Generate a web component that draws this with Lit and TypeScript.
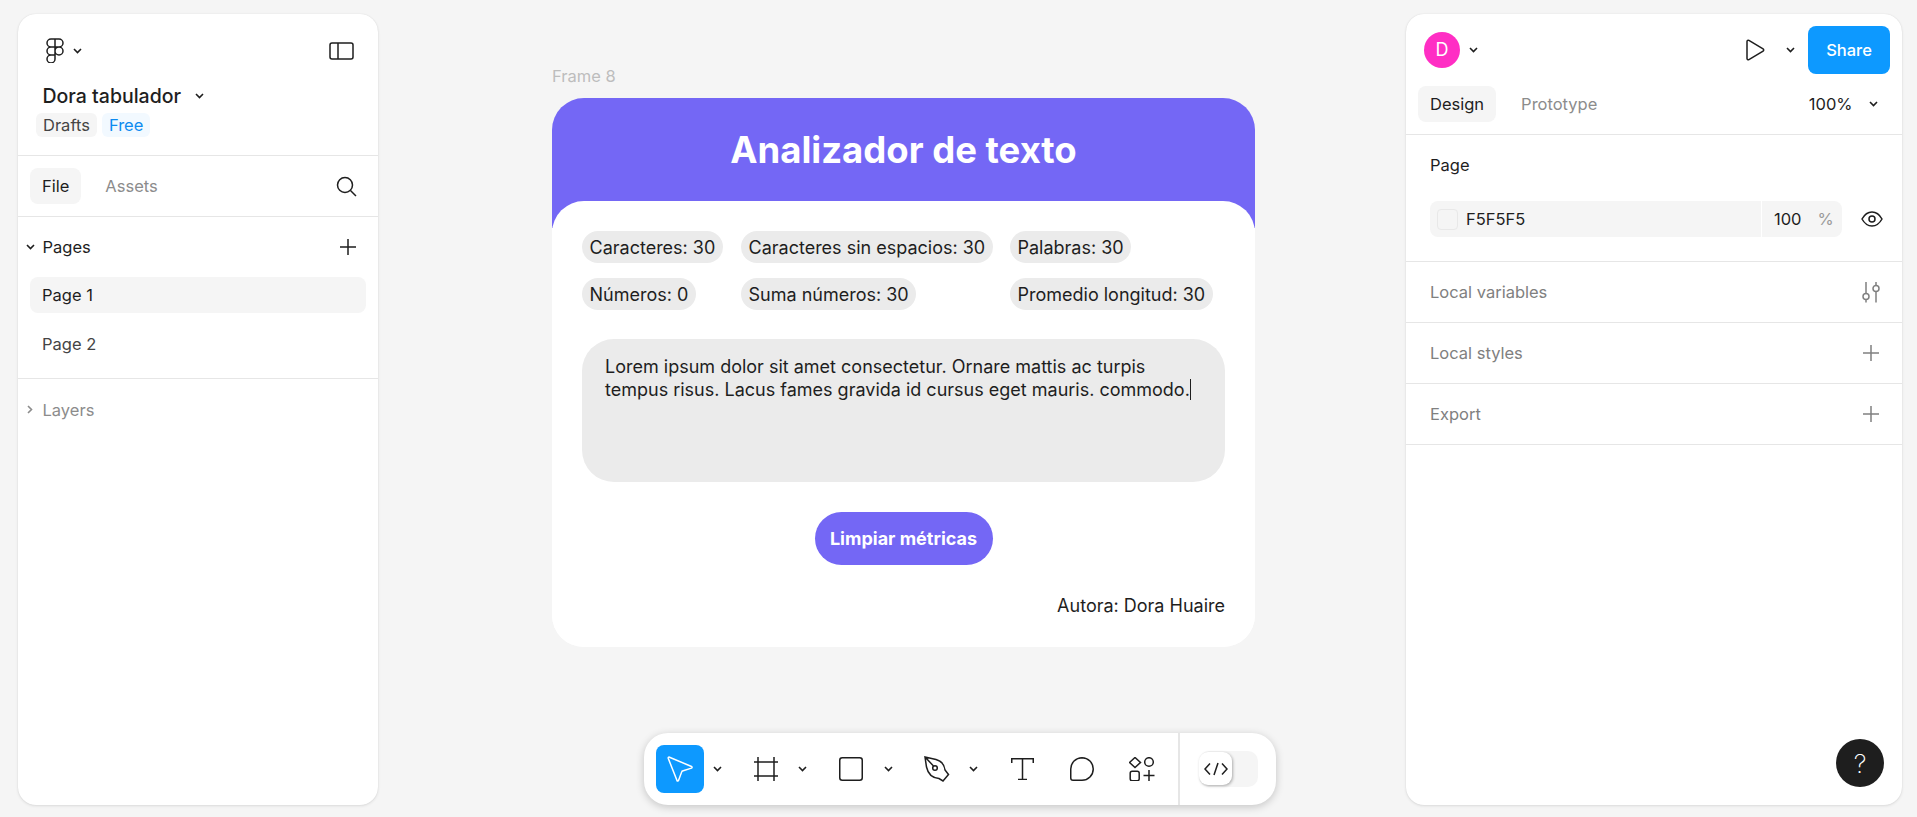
import { LitElement, css, html, svg } from "lit";
import { customElement } from "lit/decorators.js";

const chevron = html`<svg class="chev" width="9" height="6" viewBox="0 0 9 6"><path d="M1 1l3.5 3.5L8 1" /></svg>`;
const plus = html`<svg class="ico" width="18" height="18" viewBox="0 0 18 18"><path d="M9 1v16M1 9h16" /></svg>`;

const toolIcons = {
  move: svg`<path d="M2.5 1.2l22 9.300c.8.4.8 1.300 0 1.600L15.500 15c-.4.2-.7.5-.8.9l-3.200 8.600c-.3.8-1.300.8-1.500 0L1.300 2.500C1 1.500 1.600.9 2.500 1.200z" />`,
  frame: svg`<path d="M4 0v24M20 0v24M0 5h24M0 19h24" />`,
  rect: svg`<rect x=".75" y=".75" width="22.500" height="22.500" rx="2.500" />`,
  pen: svg`<path d="M1 1l11 2.500C17 5 20.500 9 21 14l3.500 4.500L19 25l-4-2.500C9 22 4 18 2.500 11zM1 1l8.500 9" /><circle cx="11" cy="12" r="2.300" />`,
  text: svg`<path d="M.75 5V.75h21.500V5M11.500.75V21.500M7 21.500h9" />`,
  comment: svg`<path d="M12 .75a11.250 11.250 0 0 1 0 22.500H3A2.250 2.250 0 0 1 .75 21V12A11.250 11.250 0 0 1 12 .75z" />`,
  comps: svg`<path d="M6 .5l5.500 5-5.500 5-5.500-5zM20 13v11M14.500 18.500h11" /><circle cx="20" cy="5" r="4.300" /><rect x="1.200" y="14.200" width="9" height="9.600" rx="2" />`,
};

@customElement("app-root")
export class AppRoot extends LitElement {
  render() {
    return html`
      <aside class="panel left">
        <div class="file-head">
          <div class="row-between">
            <div class="logo-wrap">
              <svg class="ico" width="18" height="25" viewBox="0 0 18 25">
                <path d="M9 1H5a4 4 0 0 0 0 8h4zM9 9H5a4 4 0 0 0 0 8h4zM9 17H5a4 4 0 1 0 4 4zM9 1h4a4 4 0 0 1 0 8H9zM17 13a4 4 0 1 1-8 0 4 4 0 0 1 8 0z" />
              </svg>
              ${chevron}
            </div>
            <svg class="ico" width="25" height="18" viewBox="0 0 25 18"><rect x="1" y="1" width="23" height="16" rx="2" /><path d="M9 1v16" /></svg>
          </div>
          <div class="file-title">Dora tabulador ${chevron}</div>
          <div class="chips">
            <span class="mini">Drafts</span>
            <span class="mini free">Free</span>
          </div>
        </div>
        <div class="tabs-row">
          <span class="tab on">File</span>
          <span class="tab">Assets</span>
          <svg class="ico search" width="21" height="21" viewBox="0 0 21 21"><circle cx="9" cy="9" r="7.500" /><path d="M14.500 14.500l5.500 5.500" /></svg>
        </div>
        <div class="pages">
          <div class="section-head">
            <span class="label">${chevron}Pages</span>
            ${plus}
          </div>
          <div class="page on">Page 1</div>
          <div class="page">Page 2</div>
        </div>
        <div class="layers">
          <svg class="chev side" width="6" height="9" viewBox="0 0 6 9"><path d="M1 1l3.500 3.500L1 8" /></svg>Layers
        </div>
      </aside>

      <main class="canvas">
        <div class="frame-label">Frame 8</div>
        <section class="frame">
          <header class="banner">Analizador de texto</header>
          <div class="body">
            <div class="metrics">
              <span>Caracteres: 30</span>
              <span>Caracteres sin espacios: 30</span>
              <span>Palabras: 30</span>
              <span>Números: 0</span>
              <span>Suma números: 30</span>
              <span>Promedio longitud: 30</span>
            </div>
            <div class="input">
              Lorem ipsum dolor sit amet consectetur. Ornare mattis ac turpis
              tempus risus. Lacus fames gravida id cursus eget mauris. commodo.<i class="caret"></i>
            </div>
            <button class="clear">Limpiar métricas</button>
            <div class="author">Autora: Dora Huaire</div>
          </div>
        </section>

        <div class="toolbar">
          <div class="tools">
            <span class="tool select"><svg width="26" height="26" viewBox="0 0 26 26">${toolIcons.move}</svg></span>
            <span class="drop">${chevron}</span>
            <span class="tool"><svg width="24" height="24" viewBox="0 0 24 24">${toolIcons.frame}</svg></span>
            <span class="drop">${chevron}</span>
            <span class="tool"><svg width="24" height="24" viewBox="0 0 24 24">${toolIcons.rect}</svg></span>
            <span class="drop">${chevron}</span>
            <span class="tool"><svg width="26" height="27" viewBox="0 0 26 27">${toolIcons.pen}</svg></span>
            <span class="drop">${chevron}</span>
            <span class="tool"><svg width="23" height="22" viewBox="0 0 23 22">${toolIcons.text}</svg></span>
            <span class="tool"><svg width="24" height="24" viewBox="0 0 24 24">${toolIcons.comment}</svg></span>
            <span class="tool"><svg width="26" height="24" viewBox="0 0 26 24">${toolIcons.comps}</svg></span>
          </div>
          <div class="dev">
            <span class="toggle">
              <span class="knob">
                <svg width="24" height="14" viewBox="0 0 24 14"><path d="M6 1.500L1 7l5 5.500M18 1.500L23 7l-5 5.500M14 1l-4 12" /></svg>
              </span>
            </span>
          </div>
        </div>
      </main>

      <aside class="panel right">
        <div class="top">
          <div class="avatar-wrap">
            <span class="avatar">D</span>
            ${chevron}
          </div>
          <div class="actions">
            <svg class="ico" width="20" height="22" viewBox="0 0 20 22"><path d="M2 2.500c0-1 1-1.600 1.900-1.100l14.200 8.500c.8.500.8 1.700 0 2.200L3.900 20.600C3 21.100 2 20.500 2 19.500z" /></svg>
            ${chevron}
            <button class="share">Share</button>
          </div>
        </div>
        <div class="design-tabs">
          <span class="tab on">Design</span>
          <span class="tab">Prototype</span>
          <span class="zoom">100% ${chevron}</span>
        </div>
        <div class="page-sec">
          <div class="page-title">Page</div>
          <div class="fill-row">
            <div class="field">
              <span class="swatch"></span>
              <span class="hex">F5F5F5</span>
              <span class="opacity">100</span>
              <span class="pct">%</span>
            </div>
            <svg class="ico" width="22" height="16" viewBox="0 0 22 16"><path d="M1 8c2.500-4.500 6-7 10-7s7.500 2.500 10 7c-2.500 4.500-6 7-10 7S3.500 12.500 1 8z" /><circle cx="11" cy="8" r="3" /></svg>
          </div>
        </div>
        <div class="line">
          Local variables
          <svg class="ico grey" width="18" height="21" viewBox="0 0 18 21"><path d="M4 0v11.500M4 17.500v3M14 0v3.500M14 9.500v11" /><circle cx="4" cy="14.500" r="3" /><circle cx="14" cy="6.500" r="3" /></svg>
        </div>
        <div class="line">Local styles <span class="grey-wrap">${plus}</span></div>
        <div class="line">Export <span class="grey-wrap">${plus}</span></div>
        <button class="help">?</button>
      </aside>
    `;
  }

  static styles = css`
    :host {
      display: flex;
      justify-content: space-between;
      box-sizing: border-box;
      height: 817px;
      padding: 14px 15px 12px 18px;
      background: #f5f5f5;
      font-family: Inter, "Noto Sans", sans-serif;
      font-size: 16.5px;
      color: #1e1e1e;
      overflow: hidden;
    }

    svg path,
    svg rect,
    svg circle {
      fill: none;
      stroke: currentColor;
      stroke-width: 1.5;
    }
    .chev path {
      stroke-width: 1.6;
    }

    .panel {
      background: #fff;
      border-radius: 18px;
      box-shadow: 0 1px 3px rgba(0, 0, 0, 0.1), 0 0 1px rgba(0, 0, 0, 0.12);
      flex: none;
    }
    .left {
      width: 360px;
    }
    .right {
      position: relative;
      width: 496px;
    }

    .file-head {
      height: 142px;
      box-sizing: border-box;
      padding: 24px 24px 0 24.5px;
      border-bottom: 1px solid #e6e6e6;
    }
    .row-between {
      display: flex;
      align-items: center;
      justify-content: space-between;
      height: 25px;
    }
    .logo-wrap {
      display: flex;
      align-items: center;
      gap: 9px;
      margin-left: 3.5px;
    }
    .file-title {
      display: flex;
      align-items: center;
      gap: 14px;
      margin-top: 21px;
      font-size: 19.5px;
      font-weight: 500;
      line-height: 24px;
    }
    .chips {
      display: flex;
      gap: 5px;
      margin: 5px 0 0 -6.5px;
    }
    .mini {
      padding: 0 7px;
      line-height: 24px;
      border-radius: 6px;
      background: #f5f5f5;
      color: #444;
    }
    .mini.free {
      background: #f2f9ff;
      color: #0d8bf0;
    }

    .tabs-row {
      display: flex;
      align-items: center;
      gap: 12px;
      height: 61px;
      box-sizing: border-box;
      padding: 0 21px 0 12px;
      border-bottom: 1px solid #e6e6e6;
    }
    .tab {
      padding: 0 12px;
      line-height: 36px;
      border-radius: 8px;
      color: #8c8c8c;
    }
    .tab.on {
      background: #f5f5f5;
      color: #1e1e1e;
    }
    .search {
      margin-left: auto;
    }

    .pages {
      height: 162px;
      box-sizing: border-box;
      padding: 0 12px;
      border-bottom: 1px solid #e6e6e6;
    }
    .section-head {
      display: flex;
      align-items: center;
      justify-content: space-between;
      height: 60px;
      padding: 0 9px 0 0;
    }
    .label {
      display: flex;
      align-items: center;
      gap: 8px;
      margin-left: -4.5px;
    }
    .page {
      height: 36px;
      margin-bottom: 12px;
      padding-left: 12px;
      line-height: 36px;
      border-radius: 8px;
    }
    .page.on {
      background: #f5f5f5;
    }
    .page:not(.on) {
      margin-top: 13px;
      color: #444;
    }
    .layers {
      display: flex;
      align-items: center;
      gap: 9.5px;
      height: 61px;
      padding-left: 9px;
      color: #8c8c8c;
    }

    .canvas {
      position: relative;
      flex: 1;
      padding-left: 174px;
    }
    .frame-label {
      padding-top: 53px;
      height: 18px;
      line-height: 18px;
      margin-bottom: 13px;
      color: #bdbdbd;
    }
    .frame {
      width: 703px;
      height: 549px;
      border-radius: 32px;
      background: linear-gradient(#7467f5 0 130px, #fff 130px);
      overflow: hidden;
    }
    .banner {
      height: 103px;
      box-sizing: border-box;
      padding-top: 28px;
      text-align: center;
      font-size: 36.5px;
      line-height: 48px;
      font-weight: 700;
      color: #fff;
    }
    .body {
      height: 446px;
      box-sizing: border-box;
      padding: 30px 30px 0;
      background: #fff;
      border-radius: 32px 32px 0 0;
    }
    .metrics {
      display: grid;
      grid-template-columns: 142px 252px auto;
      justify-content: start;
      justify-items: start;
      gap: 15px 17px;
      font-size: 18px;
      line-height: 33px;
    }
    .metrics span {
      height: 32px;
      padding: 0 7.5px;
      border-radius: 16px;
      background: #ebebeb;
      white-space: nowrap;
    }
    .input {
      width: 643px;
      height: 143px;
      box-sizing: border-box;
      margin-top: 29px;
      padding: 16px 23px;
      border-radius: 32px;
      background: #ebebeb;
      font-size: 18px;
      line-height: 23px;
    }
    .caret {
      display: inline-block;
      width: 1px;
      height: 21px;
      background: #1e1e1e;
      vertical-align: -4px;
    }
    .clear {
      display: block;
      width: 178px;
      height: 53px;
      margin: 30px auto 0;
      border: 0;
      border-radius: 27px;
      background: #7467f5;
      color: #fff;
      font: 700 18px Inter, sans-serif;
    }
    .author {
      margin-top: 30px;
      font-size: 18px;
      line-height: 22px;
      text-align: right;
    }

    .toolbar {
      position: absolute;
      left: 266px;
      top: 719px;
      display: flex;
      width: 632px;
      height: 72px;
      border-radius: 24px;
      background: #fff;
      box-shadow: 0 2px 8px rgba(0, 0, 0, 0.2);
    }
    .tools {
      display: flex;
      align-items: center;
      width: 536px;
      padding-left: 12px;
      box-sizing: border-box;
      border-right: 2px solid #e6e6e6;
    }
    .tool {
      display: flex;
      align-items: center;
      justify-content: center;
      width: 48px;
      height: 48px;
      border-radius: 8px;
    }
    .tool + .tool {
      margin-left: 12px;
    }
    .select {
      background: #0d99ff;
      color: #fff;
    }
    .drop {
      display: flex;
      justify-content: center;
      width: 26px;
      margin-right: 11.5px;
    }
    .dev {
      display: flex;
      align-items: center;
      padding-left: 19px;
    }
    .toggle {
      display: block;
      width: 59px;
      height: 36px;
      border-radius: 10px;
      background: #f5f5f5;
    }
    .knob {
      display: flex;
      align-items: center;
      justify-content: center;
      width: 33px;
      height: 33px;
      margin-top: 1px;
      border-radius: 9px;
      background: #fff;
      box-shadow: 1px 1px 3px rgba(0, 0, 0, 0.3);
    }

    .top {
      display: flex;
      align-items: center;
      justify-content: space-between;
      height: 72px;
      padding: 0 12px 0 18px;
    }
    .avatar-wrap,
    .actions {
      display: flex;
      align-items: center;
    }
    .avatar-wrap {
      gap: 8.5px;
    }
    .avatar {
      width: 36px;
      height: 36px;
      line-height: 36px;
      border-radius: 50%;
      background: #ff2ec4;
      color: #fff;
      font-size: 18px;
      font-weight: 400;
      text-align: center;
    }
    .actions {
      gap: 20.5px;
    }
    .share {
      width: 82px;
      height: 48px;
      margin-left: -7px;
      border: 0;
      border-radius: 8px;
      background: #0d99ff;
      color: #fff;
      font: 500 16.5px Inter, sans-serif;
    }

    .design-tabs {
      display: flex;
      align-items: center;
      gap: 13px;
      height: 49px;
      box-sizing: border-box;
      padding: 0 24.5px 12px 12px;
      border-bottom: 1px solid #e6e6e6;
    }
    .zoom {
      display: flex;
      align-items: center;
      gap: 16px;
      margin-left: auto;
    }
    .page-sec {
      height: 127px;
      box-sizing: border-box;
      padding: 0 19px 0 24px;
      border-bottom: 1px solid #e6e6e6;
    }
    .page-title {
      padding-top: 21px;
      line-height: 18px;
    }
    .fill-row {
      display: flex;
      align-items: center;
      justify-content: space-between;
      margin-top: 27px;
    }
    .field {
      display: flex;
      align-items: center;
      width: 412px;
      height: 36px;
      border-radius: 8px;
      background: #f5f5f5;
    }
    .swatch {
      width: 19px;
      height: 19px;
      margin-left: 7px;
      border: 1px solid #e8e8e8;
      border-radius: 4px;
    }
    .hex {
      width: 295px;
      height: 100%;
      margin-left: 8px;
      line-height: 36px;
      border-right: 1px solid #fff;
    }
    .opacity {
      margin-left: 12px;
    }
    .pct {
      margin-left: 16px;
      color: #9a9a9a;
    }
    .line {
      display: flex;
      align-items: center;
      justify-content: space-between;
      height: 61px;
      box-sizing: border-box;
      padding: 0 22px 0 24px;
      border-bottom: 1px solid #e6e6e6;
      color: #808080;
    }
    .grey-wrap {
      display: flex;
      color: #808080;
    }
    .help {
      position: absolute;
      right: 18px;
      bottom: 18px;
      width: 48px;
      height: 48px;
      border: 0;
      border-radius: 50%;
      background: #1e1e1e;
      color: #fff;
      font: 200 26px Inter, sans-serif;
    }
  `;
}

declare global {
  interface HTMLElementTagNameMap {
    "app-root": AppRoot;
  }
}
